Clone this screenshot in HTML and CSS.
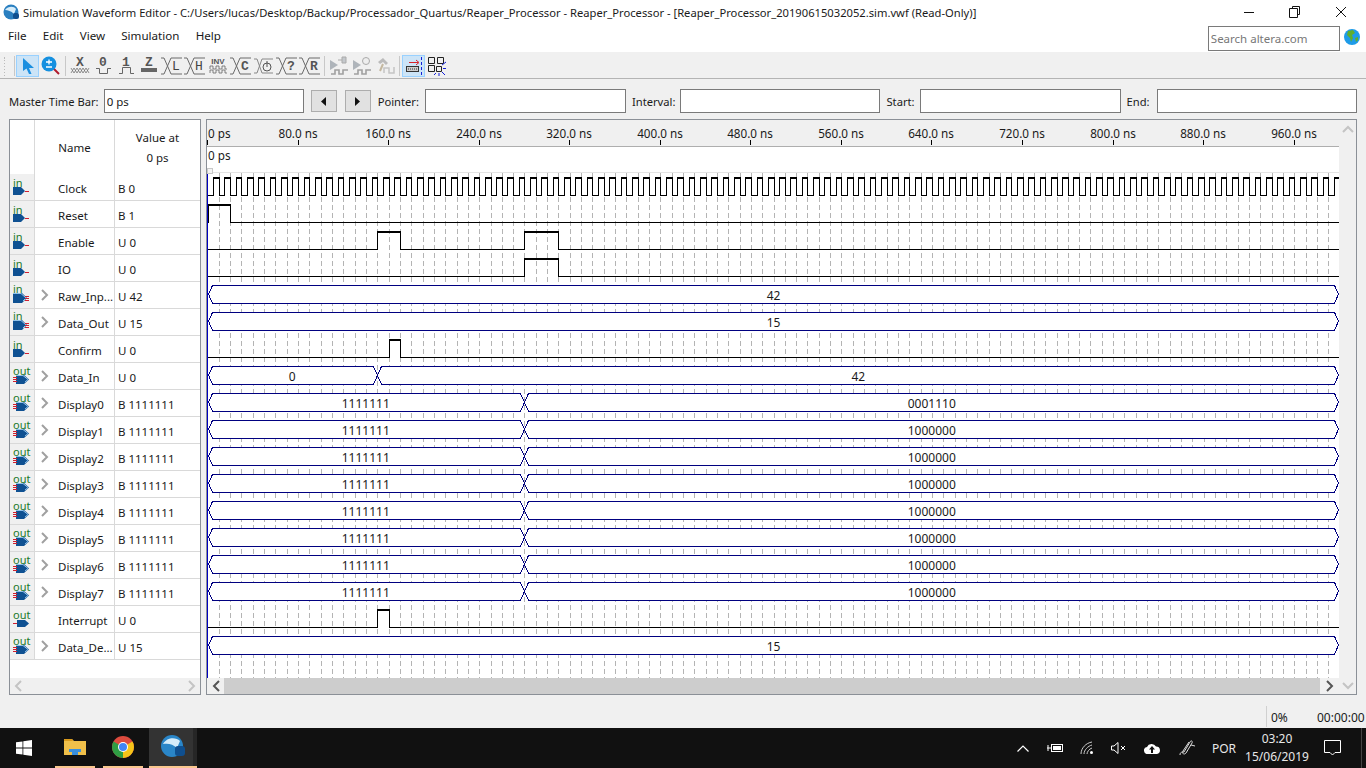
FILE: index.html
```html
<!DOCTYPE html>
<html lang="en">
<head>
    <meta charset="UTF-8">
    <title>Simulation Waveform Editor</title>
    <link rel="stylesheet" href="styles.css">
</head>
<body>

    <!-- icons used more than once -->
    <svg class="defs" width="0" height="0">
        <symbol id="bus-x" viewBox="0 0 22 20">
            <path d="M0 2H3L10 18H21M0 18H3L10 2H21" fill="none" stroke="#6a6a6a"/>
        </symbol>
        <symbol id="pin-in" viewBox="0 0 24 24">
            <path d="M3 13H11L15 17L11 21H3Z" fill="#0f5192"/>
            <path d="M15 17.500H19" stroke="#d02030"/>
        </symbol>
        <symbol id="pin-in-bus" viewBox="0 0 24 24">
            <path d="M3 11H12L17 16L12 21H3Z" fill="#0f5192"/>
            <path d="M3 11.500H11L16 16L13 19" fill="none" stroke="#8fc2ea"/>
            <path d="M15 14.500H19M15 16.500H19M15 18.500H19" stroke="#d02030"/>
        </symbol>
        <symbol id="pin-out" viewBox="0 0 24 24">
            <path d="M7 14H15L19 17.500L15 21H7Z" fill="#0f5192"/>
            <path d="M3 17.500H7" stroke="#d02030"/>
        </symbol>
        <symbol id="pin-out-bus" viewBox="0 0 24 24">
            <path d="M6 12H14L19 16.500L14 21H6Z" fill="#0f5192"/>
            <path d="M6 12.500H13L18 16.500L15 19" fill="none" stroke="#8fc2ea"/>
            <path d="M3 14.500H7M3 16.500H7M3 18.500H7" stroke="#d02030"/>
        </symbol>
        <symbol id="chev-right" viewBox="0 0 10 12">
            <path d="M2 1L7 6L2 11" fill="none" stroke-width="2"/>
        </symbol>
    </svg>

    <div class="titlebar">
        <svg class="app-icon" width="16" height="16" viewBox="0 0 16 16">
            <circle cx="8" cy="8" r="7.500" fill="#2a7fc0"/>
            <path d="M2 6C5 2 11 2 13 5L11 10C8 7 5 6 2 6Z" fill="#d5ecfa"/>
            <rect x="10" y="9" width="6" height="6" rx="2" fill="#0f4f8f"/>
        </svg>
        <span class="title-text">Simulation Waveform Editor - C:/Users/lucas/Desktop/Backup/Processador_Quartus/Reaper_Processor - Reaper_Processor - [Reaper_Processor_20190615032052.sim.vwf (Read-Only)]</span>
        <div class="win-btns">
            <div class="win-btn"><svg width="12" height="12"><path d="M1 6.500H11" stroke="#111"/></svg></div>
            <div class="win-btn"><svg width="12" height="12"><path d="M3.500 2.500V.5H10.500V8.500H8.500M.5 2.500H8.500V11.500H.5Z" fill="none" stroke="#111"/></svg></div>
            <div class="win-btn"><svg width="12" height="12"><path d="M1 1L11 11M11 1L1 11" stroke="#111"/></svg></div>
        </div>
    </div>

    <div class="menubar">
        <a>File</a>
        <a>Edit</a>
        <a>View</a>
        <a>Simulation</a>
        <a>Help</a>
        <input class="search" placeholder="Search altera.com">
        <svg class="globe" width="16" height="16" viewBox="0 0 16 16">
            <circle cx="8" cy="8" r="8" fill="#1e9be8"/>
            <path d="M4 2L9 1L11 4L8 6L9 9L7 13L6 9L3 6Z" fill="#5fae2e"/>
            <path d="M11 9L14 8L14 11L12 13Z" fill="#5fae2e"/>
        </svg>
    </div>

    <div class="toolbar">
        <span class="grip"></span>
        <span class="tool-sep first"></span>
        <div class="tool active">
            <svg width="16" height="18" viewBox="0 0 16 18"><path d="M3 1L14 11H9L11.500 17H9L6.500 11.500L3 14Z" fill="#1b8fe0"/></svg>
        </div>
        <div class="tool">
            <svg width="20" height="20" viewBox="0 0 20 20">
                <path d="M12 12L18 18" stroke="#b01c2e" stroke-width="2"/>
                <circle cx="8" cy="8" r="7.500" fill="#1590e0"/>
                <path d="M5 6H11M8 3.500V8.500M5 11H11" stroke="#fff" stroke-width="1.300"/>
            </svg>
        </div>
        <span class="tool-sep"></span>
        <div class="tool">
            <svg width="20" height="20" viewBox="0 0 20 20">
                <text x="10" y="10" class="tool-letter">X</text>
                <path d="M1 12L4 17L7 12L10 17L13 12L16 17L19 12M1 17L4 12L7 17L10 12L13 17L16 12L19 17" fill="none" stroke="#777" stroke-width=".8"/>
            </svg>
        </div>
        <div class="tool">
            <svg width="20" height="20" viewBox="0 0 20 20">
                <text x="10" y="10" class="tool-letter">0</text>
                <path d="M3 12.500H6.500V17.500H14.500V12.500H18" fill="none" stroke="#666"/>
            </svg>
        </div>
        <div class="tool">
            <svg width="20" height="20" viewBox="0 0 20 20">
                <text x="10" y="10" class="tool-letter">1</text>
                <path d="M3 17.500H6.500V11.500H14.500V17.500H18" fill="none" stroke="#666"/>
            </svg>
        </div>
        <div class="tool">
            <svg width="20" height="20" viewBox="0 0 20 20">
                <text x="10" y="10" class="tool-letter">Z</text>
                <rect x="2" y="12" width="16" height="4" fill="#666"/>
            </svg>
        </div>
        <div class="tool"><svg width="22" height="20" viewBox="0 0 22 20"><use href="#bus-x"/><text x="15" y="14" class="tool-letter thin">L</text></svg></div>
        <div class="tool"><svg width="22" height="20" viewBox="0 0 22 20"><use href="#bus-x"/><text x="15" y="14" class="tool-letter thin">H</text></svg></div>
        <div class="tool">
            <svg width="20" height="20" viewBox="0 0 20 20">
                <text x="10" y="8" class="tool-small">INV</text>
                <path d="M2 13V10H5V13H8V10H11V13H14V10H17V13H19M2 17V14H5V17H8V14H11V17H14V14H17V17H19" fill="none" stroke="#666" stroke-width=".8"/>
            </svg>
        </div>
        <div class="tool"><svg width="22" height="20" viewBox="0 0 22 20"><use href="#bus-x"/><text x="15" y="14" class="tool-letter">C</text></svg></div>
        <div class="tool">
            <svg width="20" height="20" viewBox="0 0 20 20">
                <path d="M0 3H3L8 17H19M0 17H3L8 3H19" fill="none" stroke="#888"/>
                <circle cx="13" cy="11" r="4" fill="#f0f0f0" stroke="#555"/>
                <path d="M13 5V11" stroke="#555"/>
            </svg>
        </div>
        <div class="tool"><svg width="22" height="20" viewBox="0 0 22 20"><use href="#bus-x"/><text x="15" y="14" class="tool-letter">?</text></svg></div>
        <div class="tool"><svg width="22" height="20" viewBox="0 0 22 20"><use href="#bus-x"/><text x="15" y="14" class="tool-letter">R</text></svg></div>
        <span class="tool-sep"></span>
        <div class="tool">
            <svg width="20" height="20" viewBox="0 0 20 20">
                <path d="M1 4L9 9L1 14Z" fill="#aeb4ba"/>
                <path d="M9 4H13M13 1H17V7H13Z" fill="#c4c8cc" stroke="#aaa"/>
                <path d="M2 18H6V14H10V18H14V14H19" fill="none" stroke="#a0a0a0" stroke-width="1.600"/>
            </svg>
        </div>
        <div class="tool">
            <svg width="20" height="20" viewBox="0 0 20 20">
                <path d="M1 4L9 9L1 14Z" fill="#aeb4ba"/>
                <circle cx="14" cy="5" r="3.500" fill="#eee" stroke="#aaa"/>
                <path d="M2 18H6V14H10V18H14V14H19" fill="none" stroke="#a0a0a0" stroke-width="1.600"/>
            </svg>
        </div>
        <div class="tool">
            <svg width="20" height="20" viewBox="0 0 20 20">
                <path d="M3 6L8 2L13 7L11 9L8 6L5 8Z" fill="#bbb"/>
                <path d="M8 8L5 15" stroke="#c4b8a0" stroke-width="2"/>
                <path d="M9 17V12H14V17H19V11" fill="none" stroke="#c4c4c4" stroke-width="1.500"/>
            </svg>
        </div>
        <span class="tool-sep"></span>
        <div class="tool active">
            <svg width="20" height="20" viewBox="0 0 20 20">
                <path d="M5 6.500H14M12 4L15 6.500L12 9" fill="none" stroke="#d8232a"/>
                <rect x="2.500" y="10.500" width="12" height="5" fill="#ccc" stroke="#333"/>
                <path d="M4 13H13" stroke="#333" stroke-dasharray="1 1"/>
                <path d="M17.500 1V20" stroke="#1420d8" stroke-dasharray="3 2"/>
            </svg>
        </div>
        <div class="tool">
            <svg width="20" height="20" viewBox="0 0 20 20">
                <path d="M1.500 1.500H7.500V7.500H1.500ZM10.500 1.500H16.500V7.500H10.500ZM1.500 9.500H7.500V15.500H1.500ZM9.500 10.500H14.500V15.500H9.500Z" fill="none" stroke="#222"/>
                <path d="M15 9L19 6M16 12.500H19M15 16L18 19M9 17L7 19M12 17V20" stroke="#1420d8"/>
            </svg>
        </div>
    </div>

    <div class="timebar">
        <label class="first-label">Master Time Bar:</label>
        <input class="time-input" value="0 ps">
        <button class="step"><svg width="5" height="9"><path d="M5 0V9L0 4.500Z" fill="#111"/></svg></button>
        <button class="step"><svg width="5" height="9"><path d="M0 0V9L5 4.500Z" fill="#111"/></svg></button>
        <label>Pointer:</label>
        <input class="time-input wide">
        <label class="tight">Interval:</label>
        <input class="time-input">
        <label class="tight">Start:</label>
        <input class="time-input wide">
        <label class="roomy">End:</label>
        <input class="time-input">
    </div>

    <div class="panels">
        <div class="signal-panel">
            <div class="signal-row header">
                <span class="cell-icon"></span>
                <span class="cell-name">Name</span>
                <span class="cell-value">Value at<br>0 ps</span>
            </div>
            <div class="signal-row"><span class="cell-icon"><svg class="pin"><use href="#pin-in"/><text x="3" y="13" class="pin-text">in</text></svg></span><span class="cell-name">Clock</span><span class="cell-value">B 0</span></div>
            <div class="signal-row"><span class="cell-icon"><svg class="pin"><use href="#pin-in"/><text x="3" y="13" class="pin-text">in</text></svg></span><span class="cell-name">Reset</span><span class="cell-value">B 1</span></div>
            <div class="signal-row"><span class="cell-icon"><svg class="pin"><use href="#pin-in"/><text x="3" y="13" class="pin-text">in</text></svg></span><span class="cell-name">Enable</span><span class="cell-value">U 0</span></div>
            <div class="signal-row"><span class="cell-icon"><svg class="pin"><use href="#pin-in"/><text x="3" y="13" class="pin-text">in</text></svg></span><span class="cell-name">IO</span><span class="cell-value">U 0</span></div>
            <div class="signal-row"><span class="cell-icon"><svg class="pin"><use href="#pin-in-bus"/><text x="3" y="11" class="pin-text">in</text></svg></span><span class="cell-name"><svg class="expand"><use href="#chev-right"/></svg>Raw_Inp...</span><span class="cell-value">U 42</span></div>
            <div class="signal-row"><span class="cell-icon"><svg class="pin"><use href="#pin-in-bus"/><text x="3" y="11" class="pin-text">in</text></svg></span><span class="cell-name"><svg class="expand"><use href="#chev-right"/></svg>Data_Out</span><span class="cell-value">U 15</span></div>
            <div class="signal-row"><span class="cell-icon"><svg class="pin"><use href="#pin-in"/><text x="3" y="13" class="pin-text">in</text></svg></span><span class="cell-name">Confirm</span><span class="cell-value">U 0</span></div>
            <div class="signal-row"><span class="cell-icon"><svg class="pin"><use href="#pin-out-bus"/><text x="3" y="12" class="pin-text">out</text></svg></span><span class="cell-name"><svg class="expand"><use href="#chev-right"/></svg>Data_In</span><span class="cell-value">U 0</span></div>
            <div class="signal-row"><span class="cell-icon"><svg class="pin"><use href="#pin-out-bus"/><text x="3" y="12" class="pin-text">out</text></svg></span><span class="cell-name"><svg class="expand"><use href="#chev-right"/></svg>Display0</span><span class="cell-value">B 1111111</span></div>
            <div class="signal-row"><span class="cell-icon"><svg class="pin"><use href="#pin-out-bus"/><text x="3" y="12" class="pin-text">out</text></svg></span><span class="cell-name"><svg class="expand"><use href="#chev-right"/></svg>Display1</span><span class="cell-value">B 1111111</span></div>
            <div class="signal-row"><span class="cell-icon"><svg class="pin"><use href="#pin-out-bus"/><text x="3" y="12" class="pin-text">out</text></svg></span><span class="cell-name"><svg class="expand"><use href="#chev-right"/></svg>Display2</span><span class="cell-value">B 1111111</span></div>
            <div class="signal-row"><span class="cell-icon"><svg class="pin"><use href="#pin-out-bus"/><text x="3" y="12" class="pin-text">out</text></svg></span><span class="cell-name"><svg class="expand"><use href="#chev-right"/></svg>Display3</span><span class="cell-value">B 1111111</span></div>
            <div class="signal-row"><span class="cell-icon"><svg class="pin"><use href="#pin-out-bus"/><text x="3" y="12" class="pin-text">out</text></svg></span><span class="cell-name"><svg class="expand"><use href="#chev-right"/></svg>Display4</span><span class="cell-value">B 1111111</span></div>
            <div class="signal-row"><span class="cell-icon"><svg class="pin"><use href="#pin-out-bus"/><text x="3" y="12" class="pin-text">out</text></svg></span><span class="cell-name"><svg class="expand"><use href="#chev-right"/></svg>Display5</span><span class="cell-value">B 1111111</span></div>
            <div class="signal-row"><span class="cell-icon"><svg class="pin"><use href="#pin-out-bus"/><text x="3" y="12" class="pin-text">out</text></svg></span><span class="cell-name"><svg class="expand"><use href="#chev-right"/></svg>Display6</span><span class="cell-value">B 1111111</span></div>
            <div class="signal-row"><span class="cell-icon"><svg class="pin"><use href="#pin-out-bus"/><text x="3" y="12" class="pin-text">out</text></svg></span><span class="cell-name"><svg class="expand"><use href="#chev-right"/></svg>Display7</span><span class="cell-value">B 1111111</span></div>
            <div class="signal-row"><span class="cell-icon"><svg class="pin"><use href="#pin-out"/><text x="3" y="13" class="pin-text">out</text></svg></span><span class="cell-name">Interrupt</span><span class="cell-value">U 0</span></div>
            <div class="signal-row"><span class="cell-icon"><svg class="pin"><use href="#pin-out-bus"/><text x="3" y="12" class="pin-text">out</text></svg></span><span class="cell-name"><svg class="expand"><use href="#chev-right"/></svg>Data_De...</span><span class="cell-value">U 15</span></div>
            <div class="panel-fill"></div>
            <div class="hscroll">
                <svg class="chev light flip"><use href="#chev-right"/></svg>
                <span class="hscroll-space"></span>
                <svg class="chev light"><use href="#chev-right"/></svg>
            </div>
        </div>

        <div class="wave-panel">
            <div class="wave-main">
                <svg id="waves" class="waves" width="1132" height="558" viewBox="207 120 1132 558"></svg>
                <div class="vscroll">
                    <svg class="chev light up"><use href="#chev-right"/></svg>
                </div>
            </div>
            <div class="hscroll">
                <div class="scroll-btn"><svg class="chev flip"><use href="#chev-right"/></svg></div>
                <span class="scroll-thumb"></span>
                <div class="scroll-btn wide"><svg class="chev"><use href="#chev-right"/></svg></div>
                <div class="scroll-corner"><svg class="chev light down"><use href="#chev-right"/></svg></div>
            </div>
        </div>
    </div>

    <div class="statusbar">
        <span class="status-percent">0%</span>
        <span class="status-time">00:00:00</span>
    </div>

    <div class="taskbar">
        <div class="task start">
            <svg width="16" height="16" viewBox="0 0 16 16"><path d="M0 2.300L6.500 1.400V7.600H0ZM7.300 1.300L16 0V7.600H7.300ZM0 8.400H6.500V14.600L0 13.700ZM7.300 8.400H16V16L7.300 14.700Z" fill="#fff"/></svg>
        </div>
        <div class="task open">
            <svg width="22" height="18" viewBox="0 0 22 18">
                <path d="M0 1H8L10 3H22V17H0Z" fill="#f0c04a"/>
                <path d="M0 1H8L9 3H0Z" fill="#d99a1c"/>
                <path d="M5 11H17V14H14V17H8V14H5Z" fill="#3a8fdc"/>
            </svg>
        </div>
        <div class="task open">
            <svg width="22" height="22" viewBox="0 0 22 22">
                <circle cx="11" cy="11" r="11" fill="#dd4b3e"/>
                <path d="M11 11L1.500 5.500A11 11 0 0 0 11 22Z" fill="#2f9e44"/>
                <path d="M11 11L11 22A11 11 0 0 0 20.500 5.500Z" fill="#f6c419"/>
                <circle cx="11" cy="11" r="5" fill="#fff"/>
                <circle cx="11" cy="11" r="4" fill="#4285f4"/>
            </svg>
        </div>
        <div class="task current">
            <svg width="24" height="24" viewBox="0 0 24 24">
                <circle cx="11" cy="11" r="11" fill="#2a86c8"/>
                <path d="M2 9C6 2 15 2 19 6L16 13C12 9 7 8 2 9Z" fill="#d5ecfa"/>
                <rect x="14" y="11" width="10" height="10" rx="3" fill="#0f4f8f"/>
            </svg>
        </div>
        <div class="tray">
            <div class="tray-item w30"><svg width="12" height="7"><path d="M.5 6.500L6 1L11.500 6.500" fill="none" stroke="#fff" stroke-width="1.200"/></svg></div>
            <div class="tray-item w33"><svg width="16" height="12" viewBox="0 0 16 12"><rect x="4.500" y="2.500" width="11" height="7" fill="none" stroke="#fff"/><rect x="6" y="4" width="8" height="4" fill="#fff"/><path d="M0 6H4M1 3V9" stroke="#fff"/></svg></div>
            <div class="tray-item w32"><svg width="14" height="14" viewBox="0 0 14 14"><path d="M1 13C1 7 6 2 12 1M4 13C4 9 8 5 12 4M7 13C7 11 9 8 12 7" fill="none" stroke="#ccc"/><circle cx="11.500" cy="11.500" r="1.500" fill="#fff"/></svg></div>
            <div class="tray-item w31"><svg width="15" height="12" viewBox="0 0 15 12"><path d="M.5 4H3L7 .5V11.500L3 8H.5Z" fill="none" stroke="#fff"/><path d="M10 4L14 8M14 4L10 8" stroke="#fff"/></svg></div>
            <div class="tray-item w35"><svg width="16" height="11" viewBox="0 0 16 11"><path d="M4 11A3.500 3.500 0 0 1 3 4A5 5 0 0 1 12 3.500A3.800 3.800 0 0 1 13 11Z" fill="#fff"/><path d="M8 3L5 6.500H7V10H9V6.500H11Z" fill="#111"/></svg></div>
            <div class="tray-item w36"><svg width="16" height="16" viewBox="0 0 16 16"><path d="M1 15C1 12 3 12 5 12L11 2C12 0 14 1 13 3L7 13C5 15 3 14 4 11L10 2M12 5L16 6" fill="none" stroke="#ddd"/></svg></div>
            <div class="tray-item w38 tray-lang">POR</div>
            <div class="tray-item w68 tray-clock"><span>03:20</span><span>15/06/2019</span></div>
            <div class="tray-item w42"><svg width="17" height="16" viewBox="0 0 17 16"><path d="M.5 .5H16.500V12.500H11L8.500 15L6 12.500H.5Z" fill="none" stroke="#fff"/></svg></div>
            <span class="tray-end"></span>
        </div>
    </div>

    <script src="script.js"></script>
</body>
</html>
```

FILE: styles.css
```css
* {
    box-sizing: border-box;
}

body {
    margin: 0;
    width: 1366px;
    height: 768px;
    overflow: hidden;
    display: flex;
    flex-direction: column;
    background-color: #f0f0f0;
    color: #1a1a1a;
    font-family: "Noto Sans", "Open Sans", sans-serif;
    font-size: 11.5px;
}

.defs {
    position: absolute;
}

.pin-text {
    font-family: "Noto Sans", sans-serif;
    font-size: 11px;
    fill: #1c7a2c;
}

/* Judul dan menu */
.titlebar {
    height: 24px;
    display: flex;
    align-items: center;
    background-color: #fff;
    padding-left: 3px;
    font-size: 11.2px;
}

.app-icon {
    margin-right: 4px;
}

.title-text {
    white-space: nowrap;
}

.win-btns {
    display: flex;
    margin-left: auto;
    margin-right: 2px;
}

.win-btn {
    width: 46px;
    height: 20px;
    display: flex;
    align-items: center;
    justify-content: center;
}

.menubar {
    height: 28px;
    display: flex;
    align-items: center;
    gap: 16.2px;
    background-color: #fff;
    padding-left: 8px;
    padding-bottom: 5px;
    font-size: 11.6px;
}

.search {
    width: 132px;
    height: 25px;
    margin-left: auto;
    margin-top: 5px;
    padding: 0 2px;
    border: 1px solid #7a7a7a;
    font: inherit;
    font-size: 11.500px;
}

.search::placeholder {
    color: #777;
}

.globe {
    margin: 3px 6px 0 -12px;
}

/* Toolbar */
.toolbar {
    height: 27px;
    display: flex;
    align-items: center;
    border-bottom: 1px solid #b4b4b4;
    padding-top: 1px;
}

.grip {
    width: 16px;
    height: 20px;
    flex: none;
    position: relative;
    background: radial-gradient(circle, #bbb 1px, transparent 1px) 3px 0 / 3px 3px no-repeat,
        radial-gradient(circle, #bbb 1px, transparent 1px) 3px 3px / 3px 3px repeat-y;
    margin-right: -3px;
}

.tool-sep {
    width: 6px;
    height: 20px;
    flex: none;
    background: linear-gradient(#c8c8c8, #c8c8c8) center / 1px 100% no-repeat;
}

.tool-sep.first {
    width: 3px;
}

.tool {
    width: 23px;
    height: 22px;
    flex: none;
    display: flex;
    align-items: center;
    justify-content: center;
    border: 1px solid transparent;
}

.tool svg {
    overflow: visible;
}

.tool.active {
    background-color: #cce4f7;
    border-color: #99d1ff;
}

.tool-letter {
    font-family: "Liberation Mono", monospace;
    font-size: 13px;
    font-weight: bold;
    text-anchor: middle;
    fill: #555;
}

.tool-letter.thin {
    font-weight: normal;
    fill: #444;
}

.tool-small {
    font-family: "Liberation Sans", sans-serif;
    font-size: 8px;
    font-weight: bold;
    text-anchor: middle;
    fill: #555;
}

/* Baris Master Time Bar */
.timebar {
    height: 40px;
    display: flex;
    align-items: center;
    padding-left: 9px;
    padding-top: 4px;
    font-size: 11.2px;
}

.timebar label {
    margin: 0 6px;
    white-space: nowrap;
}

.timebar label.first-label {
    margin-left: 0;
    margin-right: 5px;
}

.timebar label.tight {
    margin-right: 5px;
}

.timebar label.roomy {
    margin-right: 7px;
}

.time-input {
    width: 200px;
    height: 24px;
    border: 1px solid #7a7a7a;
    background-color: #fff;
    padding: 0 2px;
    font: inherit;
    font-size: 11.5px;
    color: inherit;
}

.time-input.wide {
    width: 201px;
}

.step {
    width: 26px;
    height: 22px;
    padding: 0;
    margin-left: 7px;
    display: flex;
    align-items: center;
    justify-content: center;
    background-color: #e1e1e1;
    border: 1px solid #adadad;
}

.step + .step {
    margin-left: 8px;
}

.step + label {
    margin-left: 7px;
}

/* Panel kiri: daftar sinyal */
.panels {
    height: 576px;
    display: flex;
    gap: 5px;
    padding-left: 9px;
    flex: none;
}

.signal-panel {
    width: 192px;
    display: flex;
    flex-direction: column;
    border: 1px solid #8b9097;
    background-color: #fff;
}

.signal-row {
    height: 27px;
    flex: none;
    display: grid;
    grid-template-columns: 25px 80px 1fr;
    border-bottom: 1px solid #d9d9d9;
    align-items: stretch;
}

.signal-row.header {
    height: 54px;
    border-bottom: none;
    text-align: center;
    line-height: 20px;
}

.signal-row.header .cell-icon {
    background-color: #fff;
}

.signal-row.header .cell-name {
    justify-content: center;
    padding: 2px 0 0;
}

.signal-row.header .cell-value {
    display: block;
    padding: 8px 0 0;
}

.cell-icon {
    background-color: #f0f0f0;
    border-right: 1px solid #d9d9d9;
    display: flex;
}

.pin {
    width: 24px;
    height: 24px;
}

.cell-name {
    display: flex;
    align-items: center;
    padding: 2px 0 0 23px;
    border-right: 1px solid #d9d9d9;
    white-space: nowrap;
    position: relative;
}

.cell-value {
    display: flex;
    align-items: center;
    padding: 2px 0 0 3px;
    white-space: nowrap;
}

.expand {
    position: absolute;
    left: 5px;
    top: 7px;
    width: 10px;
    height: 12px;
    stroke: #a0a0a0;
}

.panel-fill {
    flex: 1;
}

.hscroll {
    height: 16px;
    flex: none;
    display: flex;
    align-items: center;
    background-color: #f0f0f0;
}

.hscroll-space {
    flex: 1;
}

.chev {
    width: 10px;
    height: 12px;
    margin: 0 3px;
    stroke: #555;
}

.chev.light {
    stroke: #c4c4c4;
}

.chev.flip {
    transform: scaleX(-1);
}

.chev.up {
    transform: rotate(-90deg);
}

.chev.down {
    transform: rotate(90deg);
}

/* Panel kanan: gelombang */
.wave-panel {
    width: 1151px;
    display: flex;
    flex-direction: column;
    border: 1px solid #8b9097;
    background-color: #fff;
}

.wave-main {
    flex: 1;
    display: flex;
    min-height: 0;
}

.waves {
    display: block;
    flex: none;
}

.vscroll {
    flex: 1;
    background-color: #f0f0f0;
    display: flex;
    justify-content: center;
    padding-top: 3px;
}

.scroll-btn {
    width: 17px;
    height: 100%;
    display: flex;
    align-items: center;
    justify-content: center;
    flex: none;
}

.scroll-btn.wide {
    width: 19px;
}

.scroll-thumb {
    flex: 1;
    height: 100%;
    background-color: #cdcdcd;
}

.scroll-corner {
    width: 17px;
    height: 100%;
    flex: none;
    display: flex;
    align-items: center;
    justify-content: center;
}

/* Status bar */
.statusbar {
    height: 33px;
    display: flex;
    align-items: flex-end;
    padding-left: 1266px;
    font-size: 12px;
    padding-bottom: 1px;
}

.status-percent {
    width: 51px;
    height: 21px;
    line-height: 24px;
    border-left: 1px solid #d0d0d0;
    padding-left: 4px;
}

.status-time {
    height: 21px;
    line-height: 24px;
    white-space: nowrap;
}

/* Taskbar */
.taskbar {
    height: 40px;
    flex: none;
    display: flex;
    background-color: #111;
    color: #e8e8e8;
}

.task {
    display: flex;
    align-items: center;
    justify-content: center;
    flex: none;
}

.task.start {
    width: 48px;
}

.task.open {
    width: 40px;
    margin-left: 7px;
    border-bottom: 2px solid #f9c78e;
}

.task.open + .task.open {
    margin-left: 8px;
}

.task.current {
    width: 48px;
    margin-left: 6px;
    background: linear-gradient(90deg, #333 44px, #262626 44px);
    border-bottom: 2px solid #f9c78e;
}

.tray {
    margin-left: auto;
    display: flex;
    align-items: center;
    height: 100%;
}

.tray-item {
    height: 100%;
    display: flex;
    align-items: center;
    justify-content: center;
}

.w30 { width: 30px; }
.w31 { width: 31px; }
.w32 { width: 32px; }
.w33 { width: 33px; }
.w35 { width: 35px; }
.w36 { width: 36px; }
.w38 { width: 38px; }
.w42 { width: 42px; }
.w68 { width: 68px; }

.tray-lang {
    font-size: 12px;
}

.tray-clock {
    flex-direction: column;
    font-size: 12px;
    line-height: 18px;
    white-space: nowrap;
}

.tray-end {
    width: 13px;
    height: 100%;
    background: linear-gradient(#444, #444) 8px 0 / 1px 100% no-repeat;
}

/* Teks di dalam SVG gelombang */
.ruler-text {
    font-family: "Noto Sans", sans-serif;
    font-size: 11.7px;
    fill: #1a1a1a;
}

.bus-text {
    font-family: "Noto Sans", sans-serif;
    font-size: 12px;
    fill: #1a1a1a;
    text-anchor: middle;
}

.wave-line {
    fill: none;
    stroke: #000;
    shape-rendering: crispEdges;
}

.bus-line {
    fill: #fff;
    stroke: #000080;
    shape-rendering: crispEdges;
}
```

FILE: script.js
```js
// Gambar penggaris, grid dan gelombang ke dalam satu SVG
const svg = document.getElementById('waves');

const X0 = 207.5;
const SCALE = 1.132; // piksel per ns
const RIGHT = 1339;
const ROW_TOP = 177;
const ROW_H = 27;

function xAt(ns) {
    return Math.round(X0 + ns * SCALE) + 0.5;
}

const rows = [
    { clock: true },
    { high: [[0, 20]] },
    { high: [[150, 170], [280, 310]] },
    { high: [[280, 310]] },
    { bus: ['42'] },
    { bus: ['15'] },
    { high: [[160, 170]] },
    { bus: ['0', '42'], at: 150 },
    { bus: ['1111111', '0001110'], at: 280 },
    { bus: ['1111111', '1000000'], at: 280 },
    { bus: ['1111111', '1000000'], at: 280 },
    { bus: ['1111111', '1000000'], at: 280 },
    { bus: ['1111111', '1000000'], at: 280 },
    { bus: ['1111111', '1000000'], at: 280 },
    { bus: ['1111111', '1000000'], at: 280 },
    { bus: ['1111111', '1000000'], at: 280 },
    { high: [[150, 160]] },
    { bus: ['15'] }
];

let out = '';

// Penggaris atas
out += '<rect x="207" y="120" width="1132" height="26" fill="#f0f0f0"/>';
out += '<rect x="207" y="146" width="1132" height="1" fill="#aeaeae"/>';
out += '<rect x="207" y="172" width="1132" height="1" fill="#e4e4e4"/>';
out += '<text class="ruler-text" x="208" y="138">0 ps</text>';
out += '<text class="ruler-text" x="208" y="160">0 ps</text>';
out += '<rect x="207" y="140" width="1" height="5" fill="#000"/>';
for (let t = 80; t <= 960; t += 80) {
    const x = Math.floor(X0 + t * SCALE);
    out += '<text class="ruler-text" x="' + x + '" y="138" text-anchor="middle">' + t + '.0 ns</text>';
    out += '<rect x="' + x + '" y="140" width="1" height="5" fill="#000"/>';
}

// Grid tiap 10 ns
let grid = '';
for (let t = 10; X0 + t * SCALE < RIGHT; t += 10) {
    grid += 'M' + xAt(t) + ' 173V678';
}
out += '<path d="' + grid + '" stroke="#b4b4b4" stroke-dasharray="5 3" fill="none"/>';

// Baris sinyal
rows.forEach(function(row, i) {
    const top = ROW_TOP + i * ROW_H;
    const hi = top + 0.5;
    const lo = top + 18.5;
    const textY = top + 15;

    if (row.clock) {
        let d = 'M208 ' + lo;
        let thick = '';
        for (let n = 0; X0 + (n * 10 + 5) * SCALE < RIGHT; n++) {
            const up = xAt(n * 10 + 5);
            const down = Math.min(xAt(n * 10 + 10), RIGHT);
            d += 'H' + up + 'V' + hi + 'H' + down + 'V' + lo;
            thick += 'M' + up + ' ' + (hi + 1) + 'H' + down;
        }
        out += '<path class="wave-line" d="' + d + thick + '"/>';
    } else if (row.high) {
        let d = 'M208 ' + lo;
        let thick = '';
        row.high.forEach(function(seg) {
            const a = seg[0] === 0 ? 208 : xAt(seg[0]);
            const b = xAt(seg[1]);
            d += 'H' + a + 'V' + hi + 'H' + b + 'V' + lo;
            thick += 'M' + a + ' ' + (hi + 1) + 'H' + b;
        });
        d += 'H' + RIGHT;
        out += '<path class="wave-line" d="' + d + thick + '"/>';
    } else {
        const mid = top + 9;
        const end = RIGHT - 0.5;
        let d = 'M208.500 ' + mid + 'L212.500 ' + hi;
        if (row.bus.length === 2) {
            const c = xAt(row.at);
            d += 'H' + (c - 4) + 'L' + (c + 4) + ' ' + lo + 'H' + (end - 4) + 'L' + end + ' ' + mid;
            d += 'L' + (end - 4) + ' ' + hi + 'H' + (c + 4) + 'L' + (c - 4) + ' ' + lo + 'H212.500Z';
            out += '<path class="bus-line" d="' + d + '"/>';
            out += '<text class="bus-text" x="' + ((208 + c) / 2 - 0.5) + '" y="' + textY + '">' + row.bus[0] + '</text>';
            out += '<text class="bus-text" x="' + (c + RIGHT) / 2 + '" y="' + textY + '">' + row.bus[1] + '</text>';
        } else {
            d += 'H' + (end - 4) + 'L' + end + ' ' + mid + 'L' + (end - 4) + ' ' + lo + 'H212.500Z';
            out += '<path class="bus-line" d="' + d + '"/>';
            out += '<text class="bus-text" x="' + (208 + RIGHT) / 2 + '" y="' + textY + '">' + row.bus[0] + '</text>';
        }
    }
});

// Garis biru time bar dan pegangannya
out += '<rect x="207" y="173" width="1" height="505" fill="#0000c0"/>';
out += '<rect x="207.500" y="168.500" width="5" height="5" fill="#f4f4f4" stroke="#c8c8c8"/>';

svg.innerHTML = out;
```
